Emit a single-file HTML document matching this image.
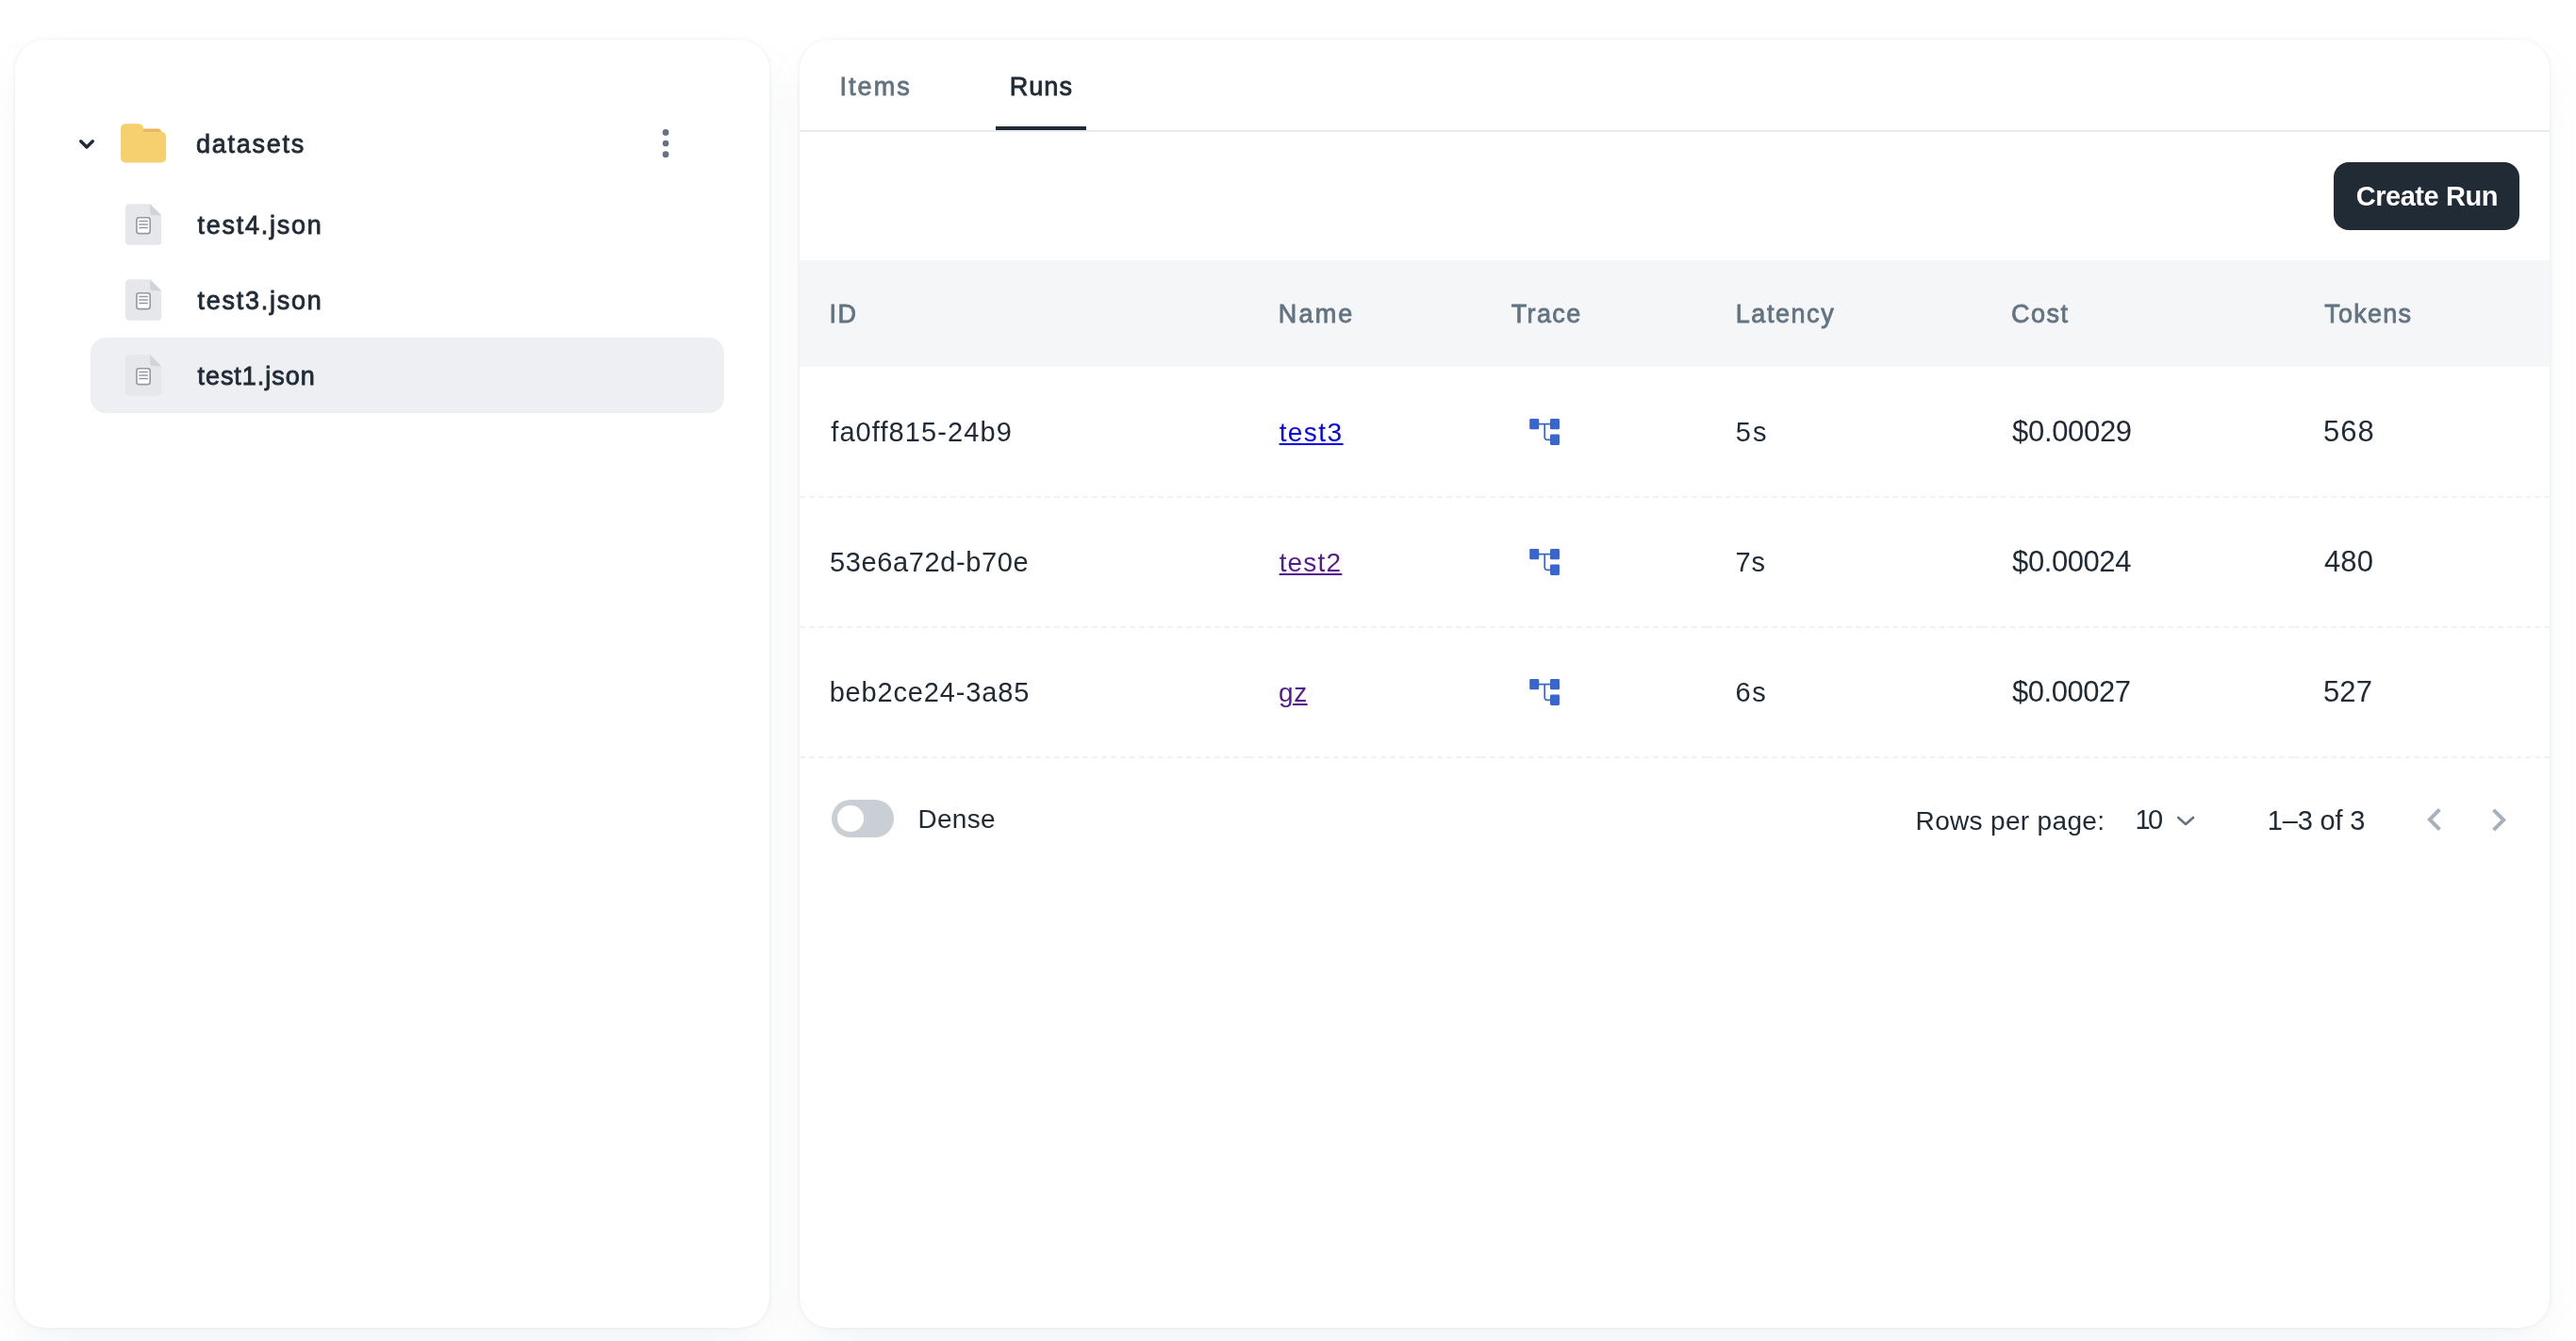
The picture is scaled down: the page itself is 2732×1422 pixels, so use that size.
<!DOCTYPE html>
<html lang="en">
<head>
<meta charset="utf-8">
<title>Datasets – Runs</title>
<style>
  *, *::before, *::after { box-sizing: border-box; }
  html, body { margin: 0; padding: 0; }
  body {
    width: 2732px; height: 1422px; overflow: hidden; position: relative;
    background: #ffffff;
    font-family: "Liberation Sans", Arial, Helvetica, sans-serif;
    font-size: 29px; line-height: 44px; color: #212b36;
  }
  .t { position: relative; display: inline-block; white-space: nowrap; }
  .sb { font-weight: 400; -webkit-text-stroke: 0.8px currentColor; }
  .card {
    position: absolute; top: 42px; height: 1366px;
    background: #ffffff; border-radius: 32px;
    box-shadow: 0 0 4px 0 rgba(145,158,171,0.2), 0 24px 48px -8px rgba(145,158,171,0.12);
    will-change: transform;
  }
  .tree { left: 16px; width: 800px; }
  .panel { left: 848px; width: 1856px; }

  /* ---------- tree ---------- */
  .tree ul { list-style: none; margin: 0; padding: 0; }
  .tree li { margin: 0; padding: 0; }
  .node { position: absolute; left: 0; height: 80px; white-space: nowrap; }
  .node .label { position: absolute; left: 192px; top: 0; height: 80px; line-height: 80px; }
  .node svg { position: absolute; display: block; }
  .folder-row { top: 70px; width: 800px; }
  .file-row { left: 80px; width: 672px; border-radius: 16px; }
  .file-row .label { left: 112px; }
  .file-row.sel { background: #edeff2; }
  .more { position: absolute; left: 670px; top: 20px; width: 40px; height: 40px; padding: 0; border: 0; background: none; }

  /* ---------- tabs ---------- */
  .tabs { position: absolute; left: 0; top: 0; width: 1856px; height: 98px; border-bottom: 2px solid #e9ecef; padding-left: 32px; display: flex; }
  .tab { position: relative; width: 96px; height: 96px; line-height: 96px; margin-right: 80px; text-align: center; color: #637381; white-space: nowrap; }
  .tab.on { color: #212b36; }
  .tab.on::after { content: ""; position: absolute; left: 0; right: 0; bottom: 0; height: 4px; background: #212b36; }

  .toolbar { position: absolute; left: 0; top: 98px; width: 1856px; height: 136px; }
  .btn { position: absolute; right: 32px; top: 32px; width: 197px; height: 72px; border: 0; padding: 0; border-radius: 16px; background: #212b36; color: #fff; font: inherit; font-weight: 700; line-height: 72px; text-align: left; white-space: nowrap; }

  /* ---------- table ---------- */
  table { position: absolute; left: 0; top: 234px; width: 1856px; border-collapse: separate; border-spacing: 0; table-layout: fixed; }
  th, td { padding: 0 0 0 32px; text-align: left; vertical-align: middle; white-space: nowrap; overflow: hidden; }
  th { height: 113px; background: #f4f6f8; color: #637381; font-weight: 400; }
  td { height: 138px; padding-top: 0; border-bottom: 2px dashed #f0f2f4; font-weight: 400; }
  tbody tr:first-child td { height: 139px; padding-top: 1px; }
  td a { text-decoration: underline; text-decoration-thickness: 2px; text-underline-offset: 2px; text-decoration-skip-ink: auto; }
  a.new { color: #0000ee; }
  a.seen { color: #551a8b; }
  .ibtn { display: block; width: 72px; height: 72px; padding: 0; border: 0; background: none; }
  .ibtn svg { display: block; }

  /* ---------- footer ---------- */
  .foot { position: absolute; left: 0; top: 762px; width: 1856px; height: 130px; }
  .switch { position: absolute; left: 34px; top: 44px; width: 66px; height: 40px; border-radius: 20px; background: #cacfd6; }
  .switch i { position: absolute; left: 6px; top: 6px; width: 28px; height: 28px; border-radius: 50%; background: #fff; }
  .foot .f { position: absolute; white-space: nowrap; top: 44px; }
  .foot svg { position: absolute; display: block; }
</style>
</head>
<body>

<aside class="card tree">
  <ul>
    <li>
      <div class="node folder-row">
        <svg style="left:64px;top:31px" width="24" height="20" viewBox="0 0 24 20"><path d="M5.7 6.8 L12 13 L18.3 6.8" fill="none" stroke="#212b36" stroke-width="3.4" stroke-linecap="round" stroke-linejoin="round"/></svg>
        <svg style="left:112px;top:16px" width="48" height="48" viewBox="0 0 48 48">
          <path d="M22 8.4 H39.5 a3.5 3.5 0 0 1 3.5 3.5 V14 H22 Z" fill="#eeb55f"/>
          <path d="M5 3.3 H19 a5 5 0 0 1 5 5 V11.8 H43 a5 5 0 0 1 5 5 V39.5 a5 5 0 0 1 -5 5 H5 a5 5 0 0 1 -5 -5 V8.3 a5 5 0 0 1 5 -5 Z" fill="#f6d06f"/>
        </svg>
        <span class="label"><span id="t_datasets" class="t sb" style="font-size:27px;letter-spacing:1.75px;left:-0.11px">datasets</span></span>
        <button class="more" aria-label="more">
          <svg width="40" height="40" viewBox="0 0 40 40" style="left:0;top:0"><circle cx="20" cy="8.4" r="3.35" fill="#637381"/><circle cx="20" cy="20" r="3.35" fill="#637381"/><circle cx="20" cy="31.7" r="3.35" fill="#637381"/></svg>
        </button>
      </div>
      <ul>
        <li><div class="node file-row" style="top:156px">
          <svg style="left:32px;top:14px" width="48" height="48" viewBox="0 0 48 48"><use href="#file"/></svg>
          <span class="label"><span id="t_test4" class="t sb" style="font-size:27px;letter-spacing:1.75px;left:1.40px">test4.json</span></span></div></li>
        <li><div class="node file-row" style="top:236px">
          <svg style="left:32px;top:14px" width="48" height="48" viewBox="0 0 48 48"><use href="#file"/></svg>
          <span class="label"><span id="t_test3" class="t sb" style="font-size:27px;letter-spacing:1.75px;left:1.40px">test3.json</span></span></div></li>
        <li><div class="node file-row sel" style="top:316px">
          <svg style="left:32px;top:14px" width="48" height="48" viewBox="0 0 48 48"><use href="#file"/></svg>
          <span class="label"><span id="t_test1" class="t sb" style="font-size:27px;letter-spacing:0.98px;left:1.42px">test1.json</span></span></div></li>
      </ul>
    </li>
  </ul>
</aside>

<main class="card panel">
  <nav class="tabs">
    <div class="tab"><span id="t_Items" class="t sb" style="font-size:27px;letter-spacing:2.02px;left:0.63px;top:1.00px">Items</span></div>
    <div class="tab on"><span id="t_Runs" class="t sb" style="font-size:27px;letter-spacing:1.04px;left:0.38px;top:1.00px">Runs</span></div>
  </nav>
  <div class="toolbar"><button class="btn"><span id="t_btn" class="t" style="letter-spacing:-0.44px;left:23.65px">Create Run</span></button></div>

  <table>
    <colgroup><col style="width:476px"><col style="width:246px"><col style="width:240px"><col style="width:292px"><col style="width:331px"><col style="width:271px"></colgroup>
    <thead>
      <tr><th><span id="t_ID" class="t sb" style="font-size:27px;letter-spacing:1.64px;left:-0.59px">ID</span></th><th><span id="t_Name" class="t sb" style="font-size:27px;letter-spacing:2.22px;left:-0.30px">Name</span></th><th><span id="t_Trace" class="t sb" style="font-size:27px;letter-spacing:1.39px;left:0.64px">Trace</span></th><th><span id="t_Latency" class="t sb" style="font-size:27px;letter-spacing:1.57px;left:-1.30px">Latency</span></th><th><span id="t_Cost" class="t sb" style="font-size:27px;letter-spacing:1.48px;left:-1.00px">Cost</span></th><th><span id="t_Tokens" class="t sb" style="font-size:27px;letter-spacing:1.24px;left:0.21px">Tokens</span></th></tr>
    </thead>
    <tbody>
      <tr><td><span id="t_id1" class="t" style="letter-spacing:1.10px;left:1.22px">fa0ff815-24b9</span></td><td><a id="t_n1" class="t new" style="font-size:28px;letter-spacing:1.44px;left:0.65px;top:0.50px">test3</a></td><td><button class="ibtn" aria-label="trace"><svg width="72" height="72" viewBox="0 0 72 72"><use href="#trace"/></svg></button></td><td><span id="t_l1" class="t" style="letter-spacing:1.99px;left:-1.16px">5s</span></td><td><span id="t_c1" class="t" style="font-size:31px;letter-spacing:-0.33px;left:0.10px">$0.00029</span></td><td><span id="t_k1" class="t" style="font-size:31px;letter-spacing:0.93px;left:-0.96px">568</span></td></tr>
      <tr><td><span id="t_id2" class="t" style="letter-spacing:0.61px;left:0.08px">53e6a72d-b70e</span></td><td><a id="t_n2" class="t seen" style="font-size:28px;letter-spacing:1.19px;left:0.65px;top:0.50px">test2</a></td><td><button class="ibtn" aria-label="trace"><svg width="72" height="72" viewBox="0 0 72 72"><use href="#trace"/></svg></button></td><td><span id="t_l2" class="t" style="letter-spacing:0.76px;left:-1.42px">7s</span></td><td><span id="t_c2" class="t" style="font-size:31px;letter-spacing:-0.43px;left:0.10px">$0.00024</span></td><td><span id="t_k2" class="t" style="font-size:31px;letter-spacing:0.10px;left:-0.03px">480</span></td></tr>
      <tr><td><span id="t_id3" class="t" style="letter-spacing:0.84px;left:-0.39px">beb2ce24-3a85</span></td><td><a id="t_n3" class="t seen" style="font-size:28px;letter-spacing:0.48px;left:0.10px;top:0.50px">gz</a></td><td><button class="ibtn" aria-label="trace"><svg width="72" height="72" viewBox="0 0 72 72"><use href="#trace"/></svg></button></td><td><span id="t_l3" class="t" style="letter-spacing:1.43px;left:-1.43px">6s</span></td><td><span id="t_c3" class="t" style="font-size:31px;letter-spacing:-0.48px;left:0.10px">$0.00027</span></td><td><span id="t_k3" class="t" style="font-size:31px;letter-spacing:0.07px;left:-0.96px">527</span></td></tr>
    </tbody>
  </table>

  <div class="foot">
    <div class="switch"><i></i></div>
    <div class="f" style="left:127px"><span id="t_Dense" class="t" style="font-size:28px;letter-spacing:0.23px;left:-1.40px;top:-2.00px">Dense</span></div>
    <div class="f" style="left:1185px"><span id="t_rpp" class="t" style="font-size:28px;letter-spacing:0.33px;left:-1.40px">Rows per page:</span></div>
    <div class="f" style="left:1417px"><span id="t_ten" class="t" style="letter-spacing:-2.82px;left:-0.43px;top:-1.00px">10</span></div>
    <svg style="left:1450px;top:54px" width="40" height="24" viewBox="0 0 40 24"><path d="M12.2 9 L20.1 15.9 L28 9" fill="none" stroke="#637381" stroke-width="2.6" stroke-linecap="round" stroke-linejoin="round"/></svg>
    <div class="f" style="left:1558px"><span id="t_range" class="t" style="letter-spacing:-0.17px;left:-1.26px">1–3 of 3</span></div>
    <svg style="left:1710px;top:42px" width="48" height="48" viewBox="0 0 24 24"><path d="M15.41 16.09l-4.58-4.59 4.58-4.59L14 5.5l-6 6 6 6z" fill="#a7b1bc"/></svg>
    <svg style="left:1778px;top:42px" width="48" height="48" viewBox="0 0 24 24"><path d="M8.59 16.34l4.58-4.59-4.58-4.59L10 5.75l6 6-6 6z" fill="#a7b1bc"/></svg>
  </div>
</main>

<svg width="0" height="0" style="position:absolute">
  <defs>
    <g id="file">
      <path d="M9 4.3 H31.2 L43.1 16.2 V43.8 a4 4 0 0 1 -4 4 H9 a4 4 0 0 1 -4 -4 V8.3 a4 4 0 0 1 4 -4 Z" fill="#e5e7eb"/>
      <path d="M31.2 4.3 L43.1 16.2 H34.2 a3 3 0 0 1 -3 -3 Z" fill="#d0d4da"/>
      <rect x="16.9" y="18.8" width="14.3" height="16.8" rx="2.6" fill="#ffffff" stroke="#9399a7" stroke-width="1.6"/>
      <path d="M19.3 22.4 H28.9 M19.3 25.9 H28.9 M19.3 29.5 H28.9" stroke="#9399a7" stroke-width="1.5" fill="none"/>
    </g>
    <g id="trace">
      <rect x="20.2" y="21.9" width="10" height="11.3" rx="1.3" fill="#3866cc"/>
      <rect x="42" y="21.9" width="10" height="11.3" rx="1.3" fill="#3866cc"/>
      <rect x="42" y="38.6" width="10" height="11.3" rx="1.3" fill="#3866cc"/>
      <path d="M30 27.6 H42 M36.2 27.6 V41.5 a2.9 2.9 0 0 0 2.9 2.9 H42" fill="none" stroke="#3866cc" stroke-width="1.7"/>
    </g>
  </defs>
</svg>
</body>
</html>
